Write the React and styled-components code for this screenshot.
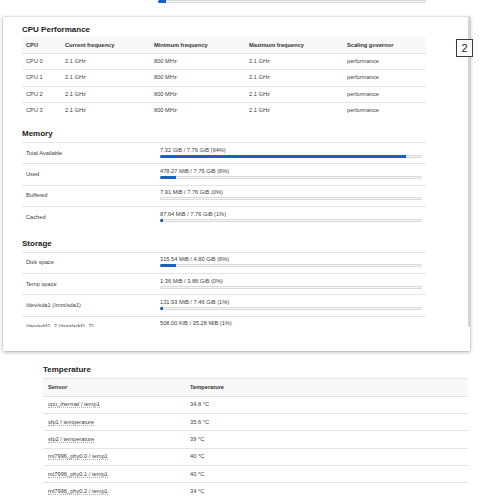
import React from 'react';
import styled, { createGlobalStyle } from 'styled-components';

const GlobalStyle = createGlobalStyle`
	html, body {
		margin: 0;
		padding: 0;
		background: #fff;
	}
	body {
		font-family: "Liberation Sans", Arial, sans-serif;
		color: #404040;
	}
`;

const Page = styled.div`
	position: relative;
	width: 487px;
	height: 499px;
	overflow: hidden;
	background: #fff;
`;

// row of the page behind the popup, scrolled mostly out of view
const StripRow = styled.div`
	display: flex;
	align-items: flex-end;
	height: 12px;
	margin-top: -8px;
	padding-left: 22px;
`;

const StripLabel = styled.div`
	width: 136px;
	font-size: 5.7px;
	line-height: 7px;
	padding-bottom: 3px;
	color: #666;
`;

const Bar = styled.div`
	width: ${p => p.$width || '100%'};
	height: 3px;
	margin-bottom: ${p => p.$mb || 0}px;
	border-radius: 2px;
	background: #f5f5f5;
	box-shadow: inset 0 0 0 1px #d9d9d9;
	overflow: hidden;
`;

const Fill = styled.div`
	height: 100%;
	background: #1a5ec6;
`;

const Section = styled.section`
	margin: ${p => p.$margin || '0'};
	width: ${p => p.$width}px;
`;

const Heading = styled.h3`
	margin: 0 0 ${p => p.$mb || 3}px;
	font-size: 8px;
	line-height: 10px;
	font-weight: bold;
	color: #222;
`;

const HeadRow = styled.div`
	display: grid;
	grid-template-columns: ${p => p.$cols};
	align-items: center;
	height: ${p => p.$h}px;
	box-sizing: border-box;
	background: #f8f8f8;
	border-top: ${p => (p.$topLine ? '1px solid #e8e8e8' : 'none')};
	font-size: 5.7px;
	font-weight: bold;
	color: #333;
`;

const BodyRow = styled.div`
	display: grid;
	grid-template-columns: ${p => p.$cols};
	align-items: center;
	height: ${p => p.$h}px;
	box-sizing: border-box;
	border-top: 1px solid #e4e4e4;
	font-size: 5.7px;
	color: #404040;
`;

const Cell = styled.div`
	padding: 0 ${p => p.$pad || 4}px;
	white-space: nowrap;
	line-height: 7px;
`;

const ValueCell = styled.div`
	display: flex;
	flex-direction: column;
	gap: 1px;
	padding: 0 4px 2px;
	line-height: 7px;
	white-space: nowrap;
`;

const Sensor = styled.span`
	border-bottom: 1px dotted #a8a8a8;
`;

const Card = styled.div`
	position: absolute;
	left: 3px;
	top: 17px;
	width: 467px;
	height: 334px;
	display: flex;
	flex-direction: column;
	background: #fff;
	box-shadow: 0 1px 4px rgba(0, 0, 0, 0.3), 0 0 1px rgba(0, 0, 0, 0.3);
`;

const ScrollArea = styled.div`
	display: flex;
	height: 310px;
`;

const ScrollContent = styled.div`
	flex: 1;
	overflow: hidden;
	padding: 8px 0 0 19px;
`;

const Thumb = styled.div`
	width: 2.5px;
	background: #d3d3d3;
`;

const Badge = styled.div`
	position: absolute;
	left: 456px;
	top: 39px;
	width: 17px;
	height: 18px;
	box-sizing: border-box;
	display: flex;
	align-items: center;
	justify-content: center;
	border: 1px solid #3a3a3a;
	background: #fff;
	font-size: 11px;
	color: #222;
`;

const cpuCols = '39px 89px 95px 98px 83px';
const memCols = '134px 1fr';
const tempCols = '142px 1fr';

const cpus = [0, 1, 2, 3].map(i => ({
	name: `CPU ${i}`,
	cur: '2.1 GHz',
	min: '800 MHz',
	max: '2.1 GHz',
	gov: 'performance',
}));

const memory = [
	{ label: 'Total Available', text: '7.32 GiB / 7.76 GiB (94%)', pct: 94 },
	{ label: 'Used', text: '478.27 MiB / 7.76 GiB (6%)', pct: 6 },
	{ label: 'Buffered', text: '7.91 MiB / 7.76 GiB (0%)', pct: 0 },
	{ label: 'Cached', text: '87.64 MiB / 7.76 GiB (1%)', pct: 1 },
];

const storage = [
	{ label: 'Disk space', text: '315.54 MiB / 4.80 GiB (6%)', pct: 6 },
	{ label: 'Temp space', text: '1.36 MiB / 3.88 GiB (0%)', pct: 0 },
	{ label: '/dev/sda1 (/mnt/sda1)', text: '131.93 MiB / 7.46 GiB (1%)', pct: 1 },
	{ label: '/dev/sdd1_2 (/mnt/sdd1_2)', text: '508.00 KiB / 35.28 MiB (1%)', pct: 1 },
];

const temps = [
	['cpu_thermal / temp1', '34.8 °C'],
	['sfp1 / temperature', '35.6 °C'],
	['sfp2 / temperature', '39 °C'],
	['mt7996_phy0.0 / temp1', '40 °C'],
	['mt7996_phy0.1 / temp1', '40 °C'],
	['mt7996_phy0.2 / temp1', '34 °C'],
];

const Usage = ({ items }) =>
	items.map(item => (
		<BodyRow key={item.label} $cols={memCols} $h={21.4}>
			<Cell>{item.label}</Cell>
			<ValueCell>
				<span>{item.text}</span>
				<Bar>
					<Fill style={{ width: `${item.pct}%` }} />
				</Bar>
			</ValueCell>
		</BodyRow>
	));

const App = () => (
	<Page>
		<GlobalStyle />

		<StripRow>
			<StripLabel>Used</StripLabel>
			<Bar $width="268px" $mb={1}>
				<Fill style={{ width: '3%' }} />
			</Bar>
		</StripRow>

		<Section $width={425} $margin="361px 0 0 43px">
			<Heading $mb={3.3}>Temperature</Heading>
			<HeadRow $cols={tempCols} $h={17.4} $topLine>
				<Cell $pad={5}>Sensor</Cell>
				<Cell $pad={5}>Temperature</Cell>
			</HeadRow>
			{temps.map(([name, value]) => (
				<BodyRow key={name} $cols={tempCols} $h={17.3}>
					<Cell $pad={5}><Sensor>{name}</Sensor></Cell>
					<Cell $pad={5}>{value}</Cell>
				</BodyRow>
			))}
		</Section>

		<Card>
			<ScrollArea>
				<ScrollContent>
					<Section $width={404}>
						<Heading $mb={2}>CPU Performance</Heading>
						<HeadRow $cols={cpuCols} $h={16}>
							<Cell>CPU</Cell>
							<Cell>Current frequency</Cell>
							<Cell>Minimum frequency</Cell>
							<Cell>Maximum frequency</Cell>
							<Cell>Scaling governor</Cell>
						</HeadRow>
						{cpus.map(c => (
							<BodyRow key={c.name} $cols={cpuCols} $h={16.25}>
								<Cell>{c.name}</Cell>
								<Cell>{c.cur}</Cell>
								<Cell>{c.min}</Cell>
								<Cell>{c.max}</Cell>
								<Cell>{c.gov}</Cell>
							</BodyRow>
						))}
					</Section>

					<Section $width={404} $margin="11px 0 0">
						<Heading>Memory</Heading>
						<Usage items={memory} />
					</Section>

					<Section $width={404} $margin="11px 0 0">
						<Heading>Storage</Heading>
						<Usage items={storage} />
					</Section>
				</ScrollContent>
				<Thumb />
			</ScrollArea>
		</Card>

		<Badge>2</Badge>
	</Page>
);

export default App;
